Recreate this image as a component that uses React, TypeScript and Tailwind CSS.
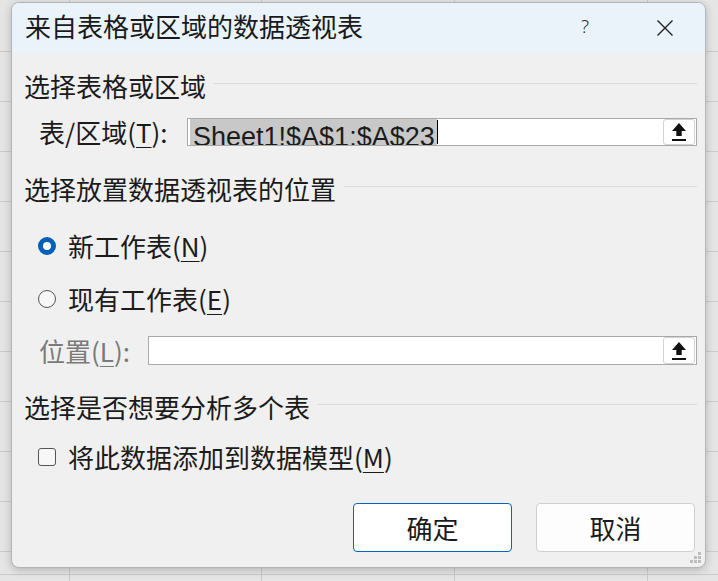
import React from 'react';

const CJK = "font-['Noto_Sans_CJK_SC','Noto_Sans',sans-serif]";

const UploadIcon: React.FC = () => (
  <svg width="16" height="20" viewBox="0 0 16 20">
    <path d="M8 1 L1 9 H5.3 V14 H10.7 V9 H15 Z" fill="#111" />
    <rect x="1" y="17" width="14" height="2" fill="#111" />
  </svg>
);

const RefInput: React.FC<{ children?: React.ReactNode; h: string }> = ({ children, h }) => (
  <div className={`flex-1 ${h} border border-[#a9a9a9] bg-white flex items-stretch overflow-hidden`}>
    <div className="flex-1 flex items-stretch overflow-hidden">{children}</div>
    <div className="mr-[1px] w-[32px] border border-[#d2d2d2] rounded-[3px] bg-white flex items-center justify-center">
      <UploadIcon />
    </div>
  </div>
);

const Heading: React.FC<{ text: string; className?: string }> = ({ text, className }) => (
  <div className={`flex items-center h-[36px] ${className ?? ''}`}>
    <span className="text-[26px] leading-[36px] text-[#1b1b1b] whitespace-nowrap">{text}</span>
    <div className="flex-1 h-px bg-[#dadada] ml-[8px] mt-[-6px]" />
  </div>
);

const U: React.FC<{ c: string }> = ({ c }) => (
  <span className="underline underline-offset-[4px] decoration-1">{c}</span>
);

const App: React.FC = () => {
  const vLines = [69, 261, 454, 647];
  const hLines = [51, 101, 151, 201, 251, 301, 351, 401, 451, 501, 551, 574];

  return (
    <div className={`relative w-[718px] h-[581px] bg-[#e5e5e5] overflow-hidden ${CJK}`}>
      {/* spreadsheet grid behind the dialog */}
      {vLines.map(x => (
        <div key={'v' + x} className="absolute top-0 bottom-0 w-px bg-[#cbcbcb]" style={{ left: x }} />
      ))}
      {hLines.map(y => (
        <div key={'h' + y} className="absolute left-0 right-0 h-px bg-[#cbcbcb]" style={{ top: y }} />
      ))}

      <div className="relative pl-[11px] pt-[2px]">
        <div className="relative w-[695px] h-[566px] rounded-[8px] border border-[#b5b5b5] bg-[#f0f0f0] shadow-[0_2px_8px_rgba(0,0,0,0.22)] overflow-hidden flex flex-col">
          {/* Title bar */}
          <div className="h-[49px] bg-[#eaf3f9] flex items-center pl-[13px] pr-[20px] shrink-0">
            <span className="flex-1 text-[26px] leading-[32px] text-[#1a1a1a] mt-[-4px] whitespace-nowrap">来自表格或区域的数据透视表</span>
            <div className="w-[40px] flex justify-center text-[19px] font-light text-[#333] font-['Noto_Sans',sans-serif] mt-[-2px]">?</div>
            <div className="w-[40px] ml-[40px] flex justify-center">
              <svg width="18" height="18" viewBox="0 0 18 18">
                <path d="M1.5 1.5 L16.5 16.5 M16.5 1.5 L1.5 16.5" stroke="#222" strokeWidth="1.4" />
              </svg>
            </div>
          </div>

          {/* Body */}
          <div className="flex-1 flex flex-col pl-[12px] pr-[8px]">
            <Heading text="选择表格或区域" className="mt-[16px]" />

            <div className="flex items-center h-[28px] mt-[14px] pl-[15px]">
              <span className="w-[148px] text-[26px] leading-[28px] text-[#1b1b1b] whitespace-nowrap">
                表/区域(<U c="T" />):
              </span>
              <RefInput h="h-[28px]">
                <div className="ml-[2px] flex items-stretch">
                  <div className="bg-[#c8c8c8] pl-[3px] pr-[2px] pt-[5px] overflow-hidden">
                    <span className="block text-[27px] leading-[26px] text-[#1b1b1b] font-['Liberation_Sans',sans-serif] whitespace-nowrap">
                      Sheet1!$A$1:$A$23
                    </span>
                  </div>
                  <div className="w-px bg-black my-[1px]" />
                </div>
              </RefInput>
            </div>

            <Heading text="选择放置数据透视表的位置" className="mt-[25px]" />

            <div className="flex items-center h-[36px] mt-[21px] pl-[14px] gap-[12px]">
              <div className="w-[18px] h-[18px] rounded-full border-[5px] border-[#005fb8] bg-white" />
              <span className="text-[26px] leading-[36px] text-[#1b1b1b] whitespace-nowrap">
                新工作表(<U c="N" />)
              </span>
            </div>

            <div className="flex items-center h-[36px] mt-[17px] pl-[14px] gap-[12px]">
              <div className="w-[18px] h-[18px] rounded-full border border-[#555] bg-[#f7f7f7]" />
              <span className="text-[26px] leading-[36px] text-[#1b1b1b] whitespace-nowrap">
                现有工作表(<U c="E" />)
              </span>
            </div>

            <div className="flex items-center h-[29px] mt-[19px] pl-[15px]">
              <span className="w-[109px] text-[26px] leading-[29px] text-[#7a7a7a] whitespace-nowrap">
                位置(<U c="L" />):
              </span>
              <RefInput h="h-[29px]" />
            </div>

            <Heading text="选择是否想要分析多个表" className="mt-[24px]" />

            <div className="flex items-center h-[36px] mt-[14px] pl-[14px] gap-[12px]">
              <div className="w-[18px] h-[18px] rounded-[3px] border border-[#555] bg-[#f7f7f7]" />
              <span className="text-[26px] leading-[36px] text-[#1b1b1b] whitespace-nowrap">
                将此数据添加到数据模型(<U c="M" />)
              </span>
            </div>

            <div className="flex justify-end gap-[24px] mt-[28px] pr-[2px]">
              <button className="w-[159px] h-[49px] rounded-[4px] border border-[#0067c0] bg-white text-[26px] text-[#1b1b1b]">
                确定
              </button>
              <button className="w-[159px] h-[49px] rounded-[4px] border border-[#d0d0d0] bg-[#fdfdfd] text-[26px] text-[#1b1b1b]">
                取消
              </button>
            </div>
          </div>

          {/* resize grip */}
          <svg className="absolute right-[3px] bottom-[3px]" width="12" height="12" viewBox="0 0 12 12">
            <rect x="8" y="0" width="3" height="3" fill="#bdbdbd" />
            <rect x="4" y="4" width="3" height="3" fill="#bdbdbd" />
            <rect x="8" y="4" width="3" height="3" fill="#bdbdbd" />
            <rect x="0" y="8" width="3" height="3" fill="#bdbdbd" />
            <rect x="4" y="8" width="3" height="3" fill="#bdbdbd" />
            <rect x="8" y="8" width="3" height="3" fill="#bdbdbd" />
          </svg>
        </div>
      </div>
    </div>
  );
};

export default App;
